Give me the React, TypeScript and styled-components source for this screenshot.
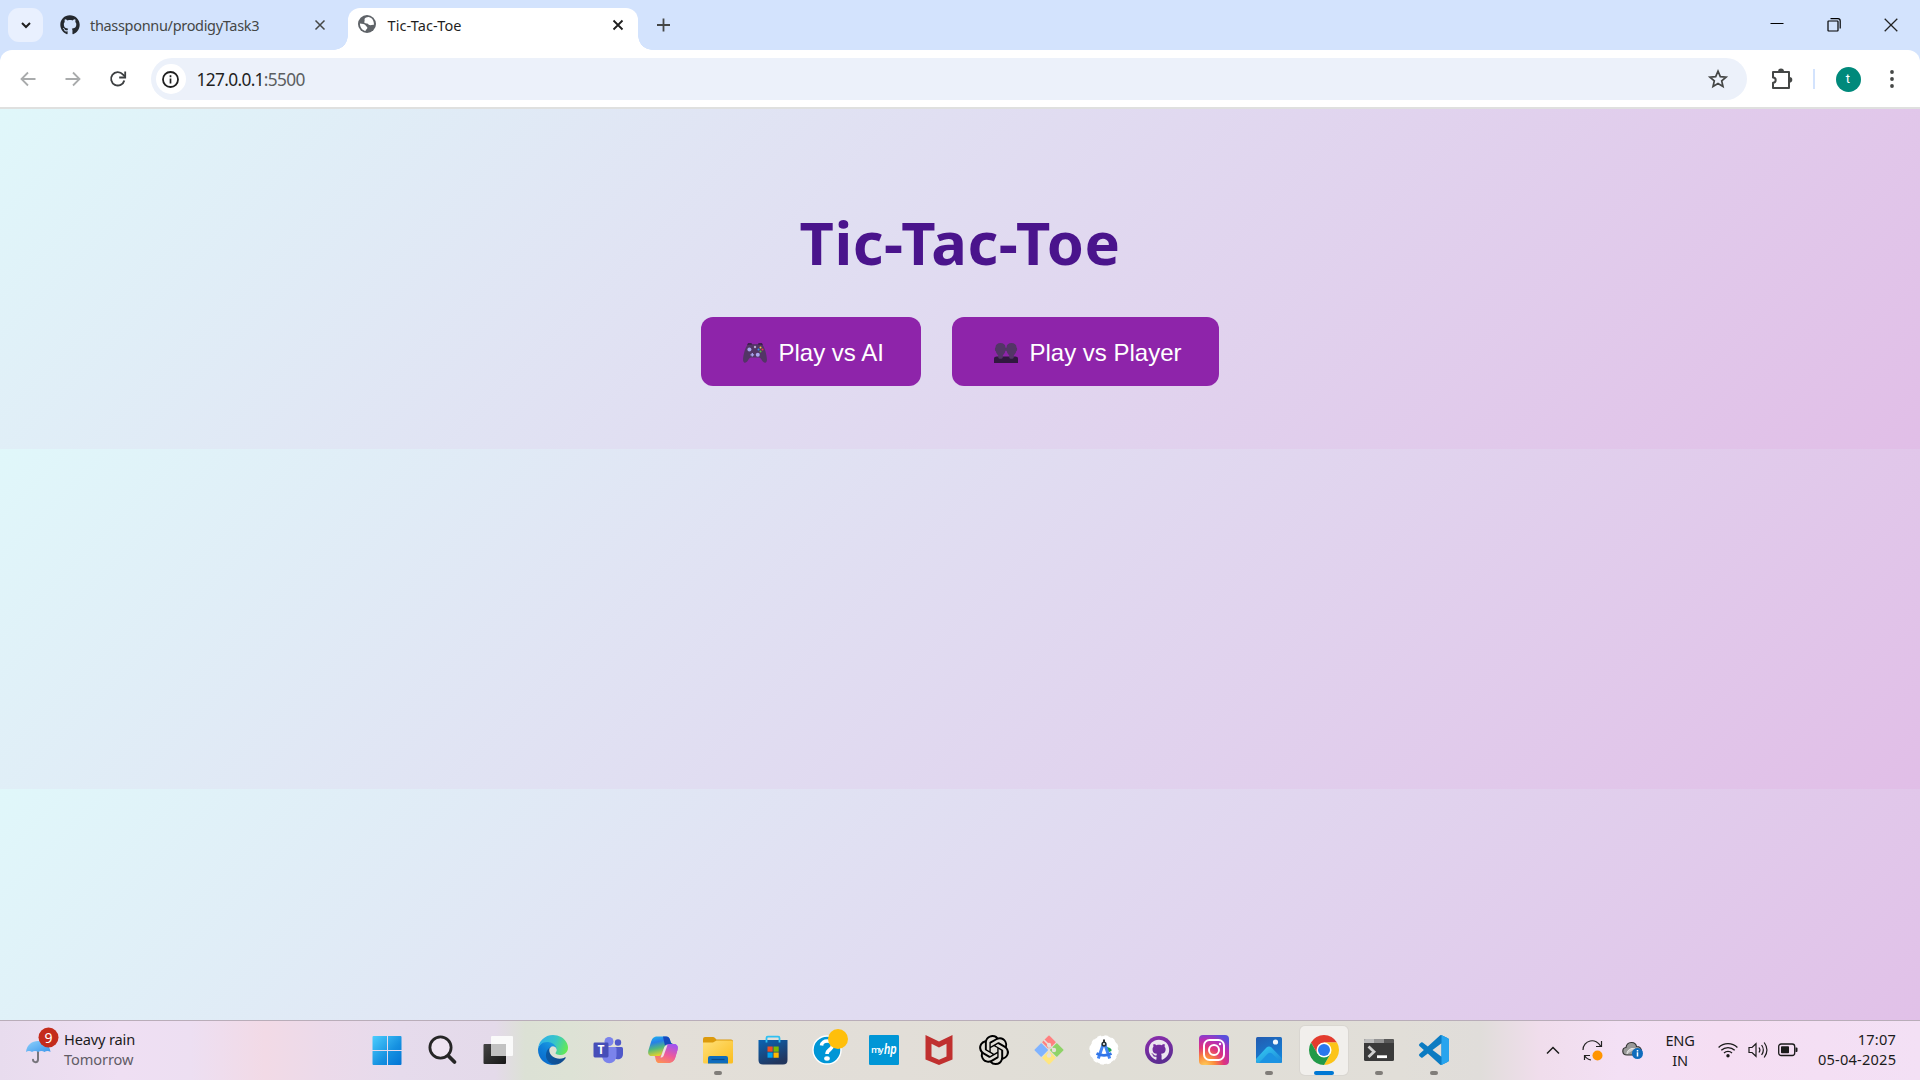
import React from "react";
import styled, { createGlobalStyle } from "styled-components";
import { FaGithub } from "react-icons/fa";
import { SiOpenai } from "react-icons/si";

const ui = `"Noto Sans", "Open Sans", sans-serif`;

const Global = createGlobalStyle`
  * { box-sizing: border-box; }
  body { margin: 0; overflow: hidden; font-family: ${ui}; }
  svg { display: block; flex: none; overflow: visible; }
`;

const Desktop = styled.div`
  width: 1920px; height: 1080px; display: flex; flex-direction: column; background: #d3e3fd; overflow: hidden;
`;

/* ---------- browser chrome ---------- */
const TabStrip = styled.header`
  height: 50px; flex: none; display: flex; align-items: flex-start; padding-left: 8px; background: #d3e3fd;
`;
const TabSearch = styled.button`
  width: 35px; height: 34px; margin-top: 8px; padding: 0; border: 0; border-radius: 11px; background: #e9f0fe;
  display: grid; place-items: center;
`;
const Tab = styled.div<{ $active?: boolean; $w: number; $pad: string }>`
  width: ${p => p.$w}px; height: ${p => (p.$active ? 43 : 34)}px; margin-top: 8px;
  padding: ${p => p.$pad}; display: flex; align-items: flex-start; position: relative;
  background: ${p => (p.$active ? "#fff" : "transparent")};
  border-radius: 12px 12px 0 0;
  color: ${p => (p.$active ? "#1f1f1f" : "#454746")};
  &::before, &::after {
    content: ""; display: ${p => (p.$active ? "block" : "none")};
    position: absolute; bottom: 1px; width: 14px; height: 14px;
  }
  &::before { left: -14px; background: radial-gradient(circle at 0 0, transparent 13.5px, #fff 14px); }
  &::after { right: -14px; background: radial-gradient(circle at 100% 0, transparent 13.5px, #fff 14px); }
`;
const TabTitle = styled.span<{ $ls?: number }>`
  flex: 1; font-size: 14.5px; line-height: 20px; margin-top: 7px; white-space: nowrap; letter-spacing: ${p => p.$ls ?? 0}px;
`;
const TabIcon = styled.span<{ $gap: number }>`margin: 7px ${p => p.$gap}px 0 0;`;
const CloseBox = styled.span`width: 10px; margin-top: 12px;`;
const NewTab = styled.span`margin: 18px 0 0 19px;`;
const WindowControls = styled.div`
  margin-left: auto; display: flex; gap: 43px; padding: 18px 22px 0 0;
`;
const Toolbar = styled.nav`
  height: 57px; flex: none; background: #fff; border-radius: 12px 12px 0 0; display: flex; align-items: center;
  padding: 1px 18px 0 18.5px;
`;
const NavIcons = styled.div`display: flex; gap: 27px; margin-right: 24px;`;
const Omnibox = styled.div`
  width: 1596px; height: 42px; border-radius: 21px; background: #ecf1fa; display: flex; align-items: center;
  padding: 0 19px 0 5px;
`;
const InfoBadge = styled.span`
  width: 30px; height: 30px; border-radius: 50%; background: #fff; display: grid; place-items: center; margin-right: 11px;
`;
const Url = styled.span`
  flex: 1; font-size: 17.3px; letter-spacing: -0.65px; color: #1f1f1f;
  span { color: #5b5e61; }
`;
const Extensions = styled.span`margin-left: 24px;`;
const Divider = styled.i`width: 2px; height: 20px; background: #d3e3fd; margin: 0 20.5px;`;
const Avatar = styled.span`
  width: 25px; height: 25px; border-radius: 50%; background: #00897b; color: #fff; font: 13px/24px Roboto, sans-serif;
  text-align: center; margin-right: auto;
`;
const Rule = styled.div`height: 2px; flex: none; background: #dfe0df;`;

/* ---------- page ---------- */
const Page = styled.main`
  flex: 1; min-height: 0; display: flex; flex-direction: column; align-items: center; padding-top: 91px;
  background: linear-gradient(135deg, #e0f7fa, #e1bee7) 0 0 / 100% 340px repeat-y;
`;
const Title = styled.h1`
  margin: 0; font: 700 59.5px/84px ${ui}; letter-spacing: 0.55px; color: #4a148c;
`;
const Choices = styled.div`display: flex; gap: 31px; margin-top: 33px;`;
const Choice = styled.button<{ $w: number }>`
  width: ${p => p.$w}px; height: 69px; border: 0; border-radius: 12px; background: #8e24aa; color: #fff;
  font: 24px/28px "Liberation Sans", Arial, sans-serif; padding: 3px 0 0 42px;
  display: flex; align-items: center; gap: 11.5px; white-space: nowrap;
`;

/* ---------- taskbar ---------- */
const Taskbar = styled.footer`
  height: 60px; flex: none; display: flex; border-top: 1px solid #b9adb9; padding: 0 24px 0 26px;
  background: linear-gradient(90deg, #e8dcee 0, #efdff3 120px, #eddff2 190px, #f2dae6 265px, #ecdaea 320px, #e6dbec 400px, #e4daea 495px, #dce1d5 525px, #dde2d5 570px, #e3dfd8 640px, #e2ded8 900px, #e0ded6 1100px, #e1ded8 1400px, #e0ddda 1480px, #f0ddec 1540px, #f3e0f5 1620px, #f5def3 1720px, #f3e0f5 1920px);
`;
const Weather = styled.div`width: 334.6px; display: flex;`;
const WeatherIcon = styled.span`margin-top: 6px;`;
const WeatherText = styled.div`
  margin: 8px 0 0 5px; font-size: 14.6px; line-height: 20px; letter-spacing: -0.15px; color: #1b1b1b; white-space: nowrap;
  span { display: block; color: #615c66; letter-spacing: -0.1px; }
`;
const Apps = styled.div`display: flex;`;
const AppSlot = styled.div`width: 55.06px; display: flex; justify-content: center;`;
const AppButton = styled.div<{ $state?: "open" | "active" }>`
  width: 48px; height: 49px; margin-top: 5px; border-radius: 5px; display: flex; flex-direction: column; align-items: center;
  padding-top: 9px; justify-content: space-between;
  background: ${p => (p.$state === "active" ? "#f1efec" : "transparent")};
  box-shadow: ${p => (p.$state === "active" ? "0 0 0 1px #d9d6d1" : "none")};
  &::after {
    content: ""; height: 4px; border-radius: 2px;
    width: ${p => (p.$state === "active" ? 20 : 8)}px;
    background: ${p => (p.$state === "active" ? "#0078d4" : p.$state ? "#807d79" : "transparent")};
  }
`;
const Tray = styled.div`
  margin-left: auto; display: flex; align-items: center; color: #1b1b1b; padding-bottom: 1px;
`;
const TrayIcon = styled.span<{ $gap: number }>`margin-right: ${p => p.$gap}px;`;
const TrayText = styled.div<{ $align: string; $w: number; $ls: number; $lift: number }>`
  width: ${p => p.$w}px; text-align: ${p => p.$align}; font-size: 14.6px; line-height: 20px; letter-spacing: ${p => p.$ls}px;
  white-space: nowrap; margin-bottom: ${p => p.$lift}px;
`;

const Cross = ({ s, w, c }: { s: number; w: number; c: string }) => (
  <svg width={s} height={s} viewBox="0 0 10 10"><path d="M.5.5l9 9M9.5.5l-9 9" stroke={c} strokeWidth={w} /></svg>
);

const Globe = () => (
  <svg width="18" height="18" viewBox="0 0 18 18">
    <circle cx="9" cy="9" r="9" fill="#5f6368" />
    <path d="M10.800 2c-2.600.2-4.400 1-4.300 2.400.1 1 .3 1.700-.2 2.400-.4 1.500 1.300 1.700 2.700 1.600 1.300 0 1.300 1.500 2.500 1.700 1.300.2 3.500-.5 4.400-.2.3-3.900-1.600-7-5.100-7.900zM1.900 8.500c2.200.2 5 .3 5.600 1.800.5 1.400 2.300 1.300 1.800 2.900-.4 1-1.800 1.200-1.700 2.800C4.300 15.400 2 12.400 1.900 8.500z" fill="#fff" />
  </svg>
);

const Gamepad = () => (
  <svg width="24" height="20" viewBox="0 0 24 20">
    <path d="M4 2.500L5 .3h3.500l.8 1.400h5.400l.8-1.400H19l1 2.200z" fill="#2b1b38" />
    <path d="M5 1.800c2.300-.8 11.700-.8 14 0 2.600 1 5.600 13 4.800 16.200-.6 2.200-2.700 2.200-4 .6-1.300-1.700-2.100-4-3.800-4H8c-1.700 0-2.500 2.300-3.800 4-1.300 1.600-3.400 1.600-4-.6C-.6 14.800 2.400 2.800 5 1.800z" fill="#533566" />
    <circle cx="6.400" cy="6.500" r="2" fill="#a9a5f0" /><circle cx="14.800" cy="11.800" r="2" fill="#a9a5f0" />
    <path d="M9.300 10v3.600M7.500 11.800h3.600" stroke="#a9a5f0" strokeWidth="1.300" />
    <circle cx="12" cy="4" r="1.200" fill="#b8a9d2" />
    <circle cx="17.500" cy="4.400" r="1" fill="#f5c636" /><circle cx="15.500" cy="6.500" r="1" fill="#3192f0" />
    <circle cx="19.500" cy="6.500" r="1" fill="#ec3b4b" /><circle cx="17.500" cy="8.600" r="1" fill="#5cbf4a" />
  </svg>
);

const People = () => (
  <svg width="24" height="20" viewBox="0 0 24 20">
    <path d="M0 20v-4.200c0-1.600 1.200-2.300 2.600-2.300h18.800c1.400 0 2.600.7 2.600 2.300V20z" fill="#30183f" />
    {[0, 11].map(x => (
      <path key={x} transform={`translate(${x})`} d="M6.500 0c3 0 5 1.700 5 4.500.8.100.9 3.400-.2 3.600-.4 2-1.400 3.300-2.500 4.300v1.800c0 1.200-1.300 1.500-2.300 1.500s-2.300-.3-2.300-1.500v-1.800c-1.100-1-2-2.300-2.500-4.300C.7 7.900.700 4.600 1.500 4.500 1.500 1.700 3.500 0 6.500 0z" fill="#533566" />
    ))}
  </svg>
);

const Umbrella = () => (
  <svg width="33" height="38" viewBox="0 0 33 38">
    <defs><linearGradient id="umb" x2="1" y2="1"><stop stopColor="#8ed0fb" /><stop offset="1" stopColor="#3c98ec" /></linearGradient></defs>
    <path d="M12 22v10.500c0 3.500-5 3.500-5 .3" fill="none" stroke="#77757c" strokeWidth="2" strokeLinecap="round" />
    <path d="M0 25C1 17.500 6 14 12 14s11.500 3.500 12.500 11c-1.500-1.500-4.500-1.500-6 0-1.800-1.500-4.500-1.500-6.300 0-1.700-1.500-4.500-1.500-6.200 0-1.500-1.500-4.500-1.500-6 0z" fill="url(#umb)" />
    <circle cx="22.500" cy="10.500" r="10" fill="#c42b1c" />
    <text x="22.500" y="15.600" fontFamily="Noto Sans, sans-serif" fontSize="14" fill="#fff" textAnchor="middle">9</text>
  </svg>
);

const I = ({ children, vb = "0 0 30 30" }: { children: React.ReactNode; vb?: string }) => (
  <svg width="30" height="30" viewBox={vb}>{children}</svg>
);

const Start = () => (
  <I vb="1 0 30 30"><defs><linearGradient id="win" gradientUnits="userSpaceOnUse" x1="0" y1="0" x2="30" y2="30"><stop stopColor="#4fd0ff" /><stop offset=".6" stopColor="#1590e0" /><stop offset="1" stopColor="#0273d4" /></linearGradient></defs>
    <path d="M1.500 1H15v14H.5V2q0-1 1-1zM16 1h12.500q1 0 1 1v13H16zM.5 16H15v14H1.500q-1 0-1-1zM16 16h13.500v13q0 1-1 1H16z" fill="url(#win)" /></I>
);
const Search = () => (
  <I><circle cx="12.500" cy="12.500" r="10.600" fill="#eee4f1" stroke="#262626" strokeWidth="2.800" /><path d="M20.500 21l6 6" stroke="#262626" strokeWidth="3.800" strokeLinecap="round" /></I>
);
const TaskView = () => (
  <I><defs><linearGradient id="tv" x2="1" y2="1"><stop stopColor="#454545" /><stop offset="1" stopColor="#171717" /></linearGradient></defs>
    <rect x=".5" y="9" width="22.500" height="20" rx="1" fill="url(#tv)" /><rect x="8" y="1" width="22" height="20" rx="1" fill="#fafafa" /><path d="M8 9h15v12H9q-1 0-1-1z" fill="#c2c2c2" /></I>
);
const Edge = () => (
  <I vb="0 0 256 256">
    <defs>
      <linearGradient id="ea" x1="60" x2="236" y1="0" y2="0" gradientUnits="userSpaceOnUse"><stop stopColor="#0c59a4" /><stop offset="1" stopColor="#114a8b" /></linearGradient>
      <linearGradient id="eb" x1="150" y1="80" x2="40" y2="230" gradientUnits="userSpaceOnUse"><stop stopColor="#1b9de2" /><stop offset=".5" stopColor="#0f7fd8" /><stop offset="1" stopColor="#0a6ccc" /></linearGradient>
      <linearGradient id="ec" x1="20" y1="40" x2="250" y2="130" gradientUnits="userSpaceOnUse"><stop stopColor="#2fb1e8" /><stop offset=".5" stopColor="#37c6c8" /><stop offset="1" stopColor="#66eb4e" /></linearGradient>
    </defs>
    <path fill="url(#ea)" d="M231.050 190.540a92.740 92.740 0 0 1-10.540 4.710 101.900 101.900 0 0 1-35.900 6.460c-47.320 0-88.540-32.550-88.540-74.320A31.470 31.470 0 0 1 112.500 100c-42.800 1.800-53.800 46.400-53.800 72.530 0 73.880 68.090 81.370 82.760 81.370 7.910 0 19.840-2.300 27-4.560l1.310-.44a128.340 128.340 0 0 0 66.600-52.800 4 4 0 0 0-5.320-5.560z" />
    <path fill="url(#eb)" d="M105.730 241.420A79.200 79.200 0 0 1 83 220.080a80.720 80.720 0 0 1 29.500-120c3.120-1.470 8.450-4.130 15.540-4a32.350 32.350 0 0 1 25.690 13 31.880 31.880 0 0 1 6.360 18.660c0-.21 24.460-79.600-80-79.600-43.900 0-80 41.660-80 78.210a130.150 130.150 0 0 0 12.110 56 128 128 0 0 0 156.380 67.110 75.550 75.550 0 0 1-62.780-8z" />
    <path fill="url(#ec)" d="M152.330 148.860c-.81 1.050-3.300 2.500-3.300 5.660 0 2.610 1.700 5.120 4.720 7.230 14.380 10 41.490 8.680 41.560 8.680a59.560 59.560 0 0 0 30.270-8.350A61.380 61.380 0 0 0 256 109.200c.26-22.410-8-37.310-11.340-43.910C223.460 23.840 177.720 0 128 0A128 128 0 0 0 0 126.200c.48-36.540 36.800-66.050 80-66.050 3.500 0 23.460.34 42 10.070 16.340 8.580 24.900 18.940 30.850 29.210 6.180 10.670 7.280 24.150 7.280 29.520s-2.740 13.330-7.800 19.910z" />
  </I>
);
const Teams = () => (
  <I><circle cx="25" cy="7.500" r="3.200" fill="#5059c9" /><path d="M20 12h8.500q1.500 0 1.500 1.500V19c0 7-10 7-10 0z" fill="#5059c9" />
    <circle cx="16" cy="6.500" r="4.500" fill="#7b83eb" /><path d="M9 12h13q1.500 0 1.500 1.500V20c0 11-14.500 11-14.500 0z" fill="#7b83eb" />
    <rect x=".5" y="7.500" width="15" height="15" rx="1.400" fill="#464eb8" /><text x="8" y="19.300" fontFamily="Open Sans, sans-serif" fontWeight="700" fontSize="12" fill="#fff" textAnchor="middle">T</text></I>
);
const Copilot = () => (
  <I><defs>
    <linearGradient id="ca" x1="0" y1="0" x2=".3" y2="1"><stop stopColor="#1fb7f0" /><stop offset=".35" stopColor="#2780e8" /><stop offset=".65" stopColor="#52b87d" /><stop offset="1" stopColor="#e4d12c" /></linearGradient>
    <linearGradient id="cb" x1=".7" y1="0" x2=".2" y2="1"><stop stopColor="#a252ee" /><stop offset=".5" stopColor="#ee5a9c" /><stop offset="1" stopColor="#ff974c" /></linearGradient></defs>
    <path d="M8 22c-1 4 1 6 4 6h3c3 0 4-2 5-5l3-9c.7-2.500 1.500-4.500 3-5 3 0 4.500 2.500 3.500 6l-2 7c-1 3.500-2.500 5-5.500 5z" fill="url(#cb)" />
    <path d="M12 28c-3 0-4-2-4.500-4.500S6.500 20 4 20h8l7-11h7c3 0 4.500 2.500 3.500 6l-2 6.500c-1 4-3 6.500-7 6.500z" fill="url(#cb)" />
    <path d="M9.500 1.500H18c2.500 0 3.500 1.500 4.200 4 .6 2 1 3.500 3.300 3.500H21c-3 0-4 1.500-5 4.500l-2 5c-1 2-2 2.500-4 2.500H3.500C.5 21-.5 18.500.5 15l2.500-8c1.200-3.800 3-5.500 6.500-5.500z" fill="url(#ca)" />
    <path d="M15 1.500h3c2.500 0 3.500 1.500 4.200 4 .6 2 1 3.500 3.300 3.500H21c-2 0-3 .5-4 2z" fill="#1748bd" />
    <path d="M16 13c.8-2 1.700-2.800 3.500-3l-4 11c-.7 1.300-1.600 1.500-3 1.500z" fill="#eee3df" /></I>
);
const Explorer = () => (
  <I><defs><linearGradient id="fo" x2="1" y2="1"><stop stopColor="#ffe07a" /><stop offset="1" stopColor="#fbbd1d" /></linearGradient></defs>
    <path d="M0 4q0-2 2-2h8q1 0 2 1l1.500 1.500H28q2 0 2 2V12H0z" fill="#dc9a0c" /><path d="M0 7.500h10l3.500-2H28.500q1.500 0 1.500 1.500v20q0 1.500-1.500 1.500h-27Q0 28.500 0 27z" fill="url(#fo)" />
    <path d="M5 28.500V23q0-2 2-2h16q2 0 2 2v5.500z" fill="#0f6cbd" /><path d="M8.500 24.500h13" stroke="#0a4a8c" strokeWidth="1.200" /></I>
);
const Store = () => (
  <I><defs><linearGradient id="st" x2=".5" y2="1"><stop stopColor="#0a64b4" /><stop offset="1" stopColor="#22365e" /></linearGradient></defs>
    <path d="M8.500 7V3q0-1.300 1.300-1.300h10.400q1.300 0 1.300 1.300v4" fill="none" stroke="#2fc0f2" strokeWidth="1.800" />
    <path d="M.5 5h29v20q0 4.500-4.500 4.500H5Q.5 29.500.5 25z" fill="url(#st)" /><path d="M8.500 5v2.500M21.500 5v2.500" stroke="#2fc0f2" strokeWidth="1.800" />
    <path d="M9.500 11.500h5.200v5.200H9.500z" fill="#f25022" /><path d="M15.500 11.500h5.200v5.200h-5.200z" fill="#7fba00" /><path d="M9.500 17.500h5.200v5.200H9.500z" fill="#00a4ef" /><path d="M15.500 17.500h5.200v5.200h-5.200z" fill="#ffb900" /></I>
);
const Help = () => (
  <I><circle cx="14" cy="15" r="14" fill="#0096d6" stroke="#fff" strokeWidth="1.400" />
    <path d="M8.500 10.500C9 4.500 19.500 4.500 19.500 10.500c0 4-5.500 4-5.500 8.500" fill="none" stroke="#fff" strokeWidth="3.600" /><ellipse cx="14" cy="23.500" rx="2.800" ry="2.200" fill="#fff" />
    <circle cx="25" cy="4" r="10" fill="#ffbf0b" /></I>
);
const MyHp = () => (
  <I><rect width="30" height="30" rx="1.200" fill="#0096d6" /><text x="2" y="18" fontFamily="Open Sans, sans-serif" fontSize="9.500" fontWeight="600" fill="#fff" textLength="12.500">my</text>
    <text x="15" y="19" fontFamily="Liberation Sans, sans-serif" fontWeight="700" fontStyle="italic" fontSize="14" fill="#fff" textLength="12.500" lengthAdjust="spacingAndGlyphs">hp</text></I>
);
const Shield = () => <I><path fillRule="evenodd" d="M1.500 0L15 6.500 28.500 0v24.500L15 30 1.500 24.500zM7.500 8.800v12.700l7.500 3.200 7.500-3.200V8.800L15 12.500z" fill="#c0302f" /></I>;
const GitApp = () => (
  <I><g transform="rotate(45 15 15)"><rect x="4.500" y="4.500" width="10" height="10" rx=".8" fill="#ff8080" /><rect x="15.500" y="4.500" width="10" height="10" rx=".8" fill="#8ed367" /><rect x="4.500" y="15.500" width="10" height="10" rx=".8" fill="#80b3ff" /><rect x="15.500" y="15.500" width="10" height="10" rx=".8" fill="#ffe680" /></g>
    <path d="M10 5l5 5v10M15 10l5 5" fill="none" stroke="#e5e1dc" strokeWidth="1.500" /><circle cx="15" cy="10" r="2.200" fill="#e5e1dc" /><circle cx="15" cy="20.500" r="2.200" fill="#e5e1dc" /><circle cx="20" cy="15" r="2.200" fill="#e5e1dc" /></I>
);
const Studio = () => (
  <I><circle cx="15" cy="15" r="14" fill="#fff" /><circle cx="15" cy="15" r="14" fill="none" stroke="#fff" strokeWidth="1.400" strokeDasharray="4 3.330" />
    <path d="M17 11.500l4 1.500q2 1 1.500 3l-3.500 1.500z" fill="#1e9e52" /><path d="M14.300 9L9.300 23.500M15.700 9l5 14.500" stroke="#4285f4" strokeWidth="3" /><path d="M7.500 18.500q7.500 3.800 15 0" fill="none" stroke="#3175e8" strokeWidth="2.600" />
    <path d="M15 4.500v3" stroke="#333" strokeWidth="2" /><circle cx="15" cy="9" r="1.800" fill="#fff" stroke="#263238" strokeWidth="1.600" /></I>
);
const GithubApp = () => (
  <I><defs><linearGradient id="gd" x2=".3" y2="1"><stop stopColor="#8d2cae" /><stop offset="1" stopColor="#5c2d91" /></linearGradient></defs>
    <circle cx="15" cy="15" r="14" fill="url(#gd)" /><FaGithub x="4.500" y="4.500" size={21} color="#ece6ef" /></I>
);
const Instagram = () => (
  <I><defs><radialGradient id="ig" cx=".2" cy="1.050" r="1.150"><stop stopColor="#ffd45c" /><stop offset=".3" stopColor="#fb8a3c" /><stop offset=".55" stopColor="#e0357a" /><stop offset=".8" stopColor="#b22fb8" /><stop offset="1" stopColor="#5b4fdc" /></radialGradient></defs>
    <rect width="30" height="30" rx="4" fill="url(#ig)" /><rect x="5" y="5" width="20" height="20" rx="5.500" fill="none" stroke="#fff" strokeWidth="2" /><circle cx="15" cy="15" r="5" fill="none" stroke="#fff" strokeWidth="2" /><circle cx="21" cy="9" r="1.200" fill="#fff" /></I>
);
const Photos = () => (
  <I><defs><linearGradient id="ph" x2=".5" y2="1"><stop stopColor="#235bb0" /><stop offset="1" stopColor="#1482d8" /></linearGradient><linearGradient id="pm" x2="1" y2="1"><stop stopColor="#37d0f4" /><stop offset="1" stopColor="#1b86d8" /></linearGradient></defs>
    <rect x="2" y="2" width="26" height="26" rx="1.500" fill="url(#ph)" /><path d="M2 24l10.500-11.500q2.500-2 5 0L28 23.500V26q0 2-2 2H4q-2 0-2-2z" fill="url(#pm)" /><path d="M5 28l9-9.500q2-1.700 4 0l9.500 9.500z" fill="#1c93e2" /><circle cx="21.500" cy="7" r="2.600" fill="#f2f7fc" /></I>
);
const Chrome = () => (
  <I><path d="M2.010 7.500A15 15 0 0 1 27.990 7.500H15L8.500 18.750z" fill="#e33b2e" /><path d="M27.990 7.500A15 15 0 0 1 15 30L21.500 18.750 15 7.500z" fill="#fcc419" /><path d="M15 30A15 15 0 0 1 2.010 7.500L8.500 18.750H21.500z" fill="#229a48" />
    <circle cx="15" cy="15" r="7.500" fill="#fff" /><circle cx="15" cy="15" r="6" fill="#2a78ee" /></I>
);
const Terminal = () => (
  <I><rect y="4" width="30" height="22" rx="1.500" fill="#3a3a3a" /><path d="M0 8V5.500Q0 4 1.500 4H10v4z" fill="#bcbcbc" /><path d="M10 4h10v4H10z" fill="#939393" /><path d="M20 4h8.500Q30 4 30 5.500V8H20z" fill="#585858" />
    <path d="M4.500 11.500l5.500 5.300-5.500 5.300" fill="none" stroke="#d0d0d0" strokeWidth="2.800" /><path d="M13 21.700h10" stroke="#fff" strokeWidth="2.800" /></I>
);
const VsCode = () => (
  <I vb="0 0 24 24"><path fill="#0b7bc2" d="M23.150 2.587L18.210.21a1.494 1.494 0 0 0-1.705.29l-9.460 8.630-4.120-3.128a.999.999 0 0 0-1.276.057L.327 7.261A1 1 0 0 0 .326 8.740L3.899 12 .326 15.260a1 1 0 0 0 .001 1.479L1.650 17.940a.999.999 0 0 0 1.276.057l4.120-3.128 9.460 8.630a1.492 1.492 0 0 0 1.704.290l4.942-2.377A1.500 1.500 0 0 0 24 20.060V3.939a1.500 1.500 0 0 0-.850-1.352zm-5.146 14.861L10.826 12l7.178-5.448v10.896z" />
    <path d="M18 .1l5.150 2.487A1.500 1.500 0 0 1 24 3.939V20.060a1.500 1.500 0 0 1-.850 1.352L18 23.900z" fill="#27a4ee" /></I>
);

const apps: { el: React.ReactNode; state?: "open" | "active" }[] = [
  { el: <Start /> }, { el: <Search /> }, { el: <TaskView /> }, { el: <Edge /> }, { el: <Teams /> }, { el: <Copilot /> },
  { el: <Explorer />, state: "open" }, { el: <Store /> }, { el: <Help /> }, { el: <MyHp /> }, { el: <Shield /> },
  { el: <SiOpenai size={30} /> }, { el: <GitApp /> }, { el: <Studio /> }, { el: <GithubApp /> }, { el: <Instagram /> },
  { el: <Photos />, state: "open" }, { el: <Chrome />, state: "active" }, { el: <Terminal />, state: "open" }, { el: <VsCode />, state: "open" },
];

export default function App() {
  return (
    <Desktop>
      <Global />
      <TabStrip>
        <TabSearch><svg width="10" height="7" viewBox="0 0 10 7"><path d="M1 1l4 4 4-4" fill="none" stroke="#1f1f1f" strokeWidth="2" /></svg></TabSearch>
        <Tab $w={305} $pad="0 23px 0 17px">
          <TabIcon $gap={10}><FaGithub size={20} color="#24292f" /></TabIcon>
          <TabTitle $ls={-0.32}>thassponnu/prodigyTask3</TabTitle>
          <CloseBox><Cross s={10} w={1.5} c="#454746" /></CloseBox>
        </Tab>
        <Tab $active $w={290} $pad="0 15px 0 10px">
          <TabIcon $gap={11.5}><Globe /></TabIcon>
          <TabTitle $ls={0.1}>Tic-Tac-Toe</TabTitle>
          <CloseBox><Cross s={10} w={1.8} c="#1f1f1f" /></CloseBox>
        </Tab>
        <NewTab><svg width="14" height="14" viewBox="0 0 14 14"><path d="M6.500 .5v13M0 7h13" stroke="#454746" strokeWidth="1.800" /></svg></NewTab>
        <WindowControls>
          <svg width="14" height="14" viewBox="0 0 14 14"><path d="M.5 5.500h13" stroke="#000" /></svg>
          <svg width="14" height="14" viewBox="0 0 14 14"><rect x="1" y="3" width="10" height="10" rx=".5" fill="none" stroke="#000" strokeWidth="1.200" /><path d="M3.500.7h7.500q2.200 0 2.200 2.200v7.600" fill="none" stroke="#000" strokeWidth="1.200" /></svg>
          <Cross s={14} w={0.9} c="#222" />
        </WindowControls>
      </TabStrip>
      <Toolbar>
        <NavIcons>
          <svg width="18" height="18" viewBox="0 0 18 18"><path d="M9 2.500L2.500 9 9 15.500M2.500 9H16.500" fill="none" stroke="#a9abac" strokeWidth="1.800" /></svg>
          <svg width="18" height="18" viewBox="0 0 18 18"><path d="M9 2.500L15.500 9 9 15.500M15.500 9H1.500" fill="none" stroke="#a9abac" strokeWidth="1.800" /></svg>
          <svg width="18" height="18" viewBox="0 0 18 18"><path d="M15.300 10.500A6.700 6.700 0 1 1 13.800 4.300L16 6.500" fill="none" stroke="#3c3f41" strokeWidth="1.900" /><path d="M16.200 1.500v6h-6" fill="none" stroke="#3c3f41" strokeWidth="1.800" /></svg>
        </NavIcons>
        <Omnibox>
          <InfoBadge><svg width="17" height="17" viewBox="0 0 17 17"><circle cx="8.500" cy="8.500" r="7.500" fill="none" stroke="#1f1f1f" strokeWidth="1.800" /><path d="M8.500 7.500v5M8.500 4.300v1.900" stroke="#1f1f1f" strokeWidth="1.700" /></svg></InfoBadge>
          <Url>127.0.0.1<span>:5500</span></Url>
          <svg width="20" height="20" viewBox="0 0 20 20"><path d="M10 2.200l2.300 5.400 5.800.5-4.400 3.800 1.300 5.700-5-3-5 3 1.300-5.700L1.900 8.100l5.800-.5z" fill="none" stroke="#454746" strokeWidth="1.700" /></svg>
        </Omnibox>
        <Extensions><svg width="22" height="22" viewBox="0 0 22 22"><path d="M2 4h16v16H2v-5.200c3.600 0 3.600-5.400 0-5.400z" fill="none" stroke="#454746" strokeWidth="2" strokeLinejoin="round" /><path d="M7 3.500a3 3 0 0 1 6 0zM18.500 9a2.700 2.700 0 0 1 0 5.600z" fill="#454746" /></svg></Extensions>
        <Divider />
        <Avatar>t</Avatar>
        <svg width="20" height="20" viewBox="0 0 20 20"><g fill="#454746"><circle cx="10" cy="3" r="1.900" /><circle cx="10" cy="10" r="1.900" /><circle cx="10" cy="17" r="1.900" /></g></svg>
      </Toolbar>
      <Rule />
      <Page>
        <Title>Tic-Tac-Toe</Title>
        <Choices>
          <Choice $w={220}><Gamepad />Play vs AI</Choice>
          <Choice $w={267}><People />Play vs Player</Choice>
        </Choices>
      </Page>
      <Taskbar>
        <Weather>
          <WeatherIcon><Umbrella /></WeatherIcon>
          <WeatherText>Heavy rain<span>Tomorrow</span></WeatherText>
        </Weather>
        <Apps>{apps.map((a, i) => <AppSlot key={i}><AppButton $state={a.state}>{a.el}</AppButton></AppSlot>)}</Apps>
        <Tray>
          <TrayIcon $gap={22}><svg width="14" height="9" viewBox="0 0 14 9"><path d="M1 7.500l6-6 6 6" fill="none" stroke="#1b1b1b" strokeWidth="1.500" /></svg></TrayIcon>
          <TrayIcon $gap={19}><svg width="21" height="21" viewBox="0 0 21 21"><g fill="none" stroke="#222" strokeWidth="1.200"><path d="M1 10A9.200 9.200 0 0 1 18.500 6M19.500 1v5.500H14M2.500 20v-4.500H8M2.500 15.500Q5 19.500 9 20" /></g><circle cx="15.500" cy="15.500" r="5" fill="#ff9500" /></svg></TrayIcon>
          <TrayIcon $gap={20}><svg width="22" height="20" viewBox="0 0 22 20"><path d="M5 15C-.5 15-.3 8 4 7.500 5 1 13.500 1 14.500 6.500c4 0 5 3 5 5L12 15z" fill="#999" stroke="#333" strokeWidth="1.200" /><path d="M5 14c0-4 4-6.500 8-5" fill="#ccc" stroke="#eee" /><circle cx="15.500" cy="13.500" r="5.500" fill="#0f6cbd" /><path d="M15.500 12.300v4.200M15.500 10v1.500" stroke="#fff" strokeWidth="1.500" /></svg></TrayIcon>
          <TrayText $align="center" $w={32} $ls={-0.3} $lift={0}>ENG<br />IN</TrayText>
          <TrayIcon $gap={22} />
          <TrayIcon $gap={10}><svg width="20" height="18" viewBox="0 0 20 18"><g fill="none" stroke="#1b1b1b" strokeWidth="1.300"><path d="M.6 6.500a13.300 13.300 0 0 1 18.800 0M3.300 9.300a9.500 9.500 0 0 1 13.400 0M6 12a5.700 5.700 0 0 1 8 0" /></g><circle cx="10" cy="14.800" r="1.700" fill="#1b1b1b" /></svg></TrayIcon>
          <TrayIcon $gap={10}><svg width="20" height="18" viewBox="0 0 20 18"><g fill="none" stroke="#1b1b1b" strokeWidth="1.200"><path d="M1 6.500h3l4-3.800v12.600l-4-3.800H1zM11 6.500q1.800 2.500 0 5M13.600 4q3.500 5 0 10M16.200 1.500q5.500 7.500 0 15" /></g></svg></TrayIcon>
          <TrayIcon $gap={20}><svg width="20" height="14" viewBox="0 0 20 14"><rect x=".7" y="1" width="16" height="11.500" rx="2.500" fill="none" stroke="#1b1b1b" strokeWidth="1.300" /><rect x="3" y="3.300" width="8" height="7" rx=".8" fill="#1b1b1b" /><path d="M17.500 4.500h1q1 0 1 1v2.500q0 1-1 1h-1z" fill="#1b1b1b" /></svg></TrayIcon>
          <TrayText $align="right" $w={78} $ls={0.2} $lift={3}>17:07<br />05-04-2025</TrayText>
        </Tray>
      </Taskbar>
    </Desktop>
  );
}
